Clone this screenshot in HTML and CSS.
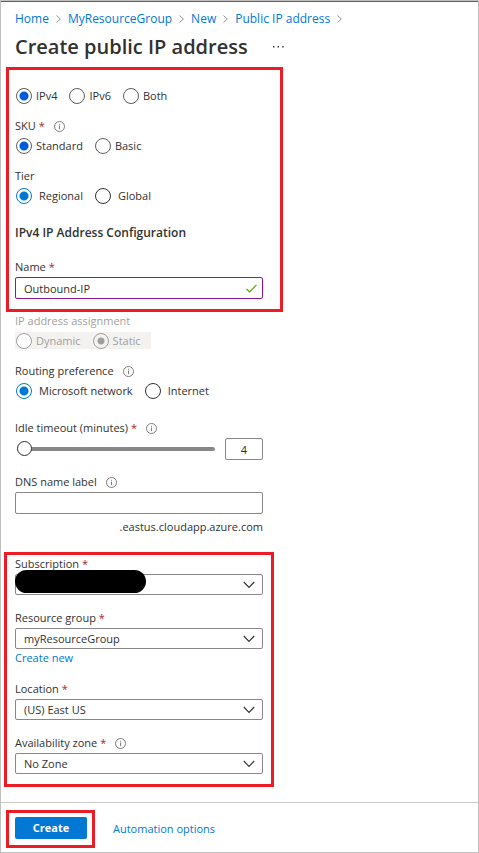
FILE: index.html
```html
<!DOCTYPE html>
<html lang="en">
<head>
<meta charset="utf-8">
<meta name="viewport" content="width=device-width, initial-scale=1">
<title>Create public IP address</title>
<link rel="stylesheet" href="styles.css">
</head>
<body>
<svg class="defs" aria-hidden="true">
  <symbol id="info" viewBox="0 0 11 11"><circle cx="5.5" cy="5.5" r="5" fill="none" stroke="currentColor" stroke-width="0.8"/><path d="M5.5 4.6V8.2M5.5 2.8V3.8" fill="none" stroke="currentColor" stroke-width="0.8"/></symbol>
  <symbol id="chevron" viewBox="0 0 12 8"><path d="M0.8 1L6 6.4L11.2 1" fill="none" stroke="currentColor" stroke-width="1.1"/></symbol>
  <symbol id="crumb" viewBox="0 0 6 10"><path d="M0.6 0.8L5.2 5L0.6 9.2" fill="none" stroke="currentColor" stroke-width="0.8"/></symbol>
</svg>
<div class="blade">
  <header class="top">
    <nav class="breadcrumb" aria-label="Breadcrumb">
      <a href="#">Home</a><svg><use href="#crumb"/></svg>
      <a href="#">MyResourceGroup</a><svg><use href="#crumb"/></svg>
      <a href="#">New</a><svg><use href="#crumb"/></svg>
      <a href="#">Public IP address</a><svg><use href="#crumb"/></svg>
    </nav>
    <div class="title-row">
      <h1>Create public IP address</h1>
      <button class="more" type="button" aria-label="More"><svg viewBox="0 0 11 2"><path d="M0 0h1.4v1.4H0zM4.6 0H6v1.4H4.6zM9.2 0h1.4v1.4H9.2z" fill="currentColor"/></svg></button>
    </div>
  </header>

  <form class="form" id="ip-form">
    <section class="callout callout-basics">
      <div class="radios">
        <label><input type="radio" name="version" checked>IPv4</label>
        <label><input type="radio" name="version">IPv6</label>
        <label><input type="radio" name="version">Both</label>
      </div>
      <fieldset class="group">
        <legend>SKU <span class="req">*</span><svg class="info"><use href="#info"/></svg></legend>
        <div class="radios">
          <label><input type="radio" name="sku" checked>Standard</label>
          <label><input type="radio" name="sku">Basic</label>
        </div>
      </fieldset>
      <fieldset class="group">
        <legend>Tier</legend>
        <div class="radios fluent">
          <label><input type="radio" name="tier" checked>Regional</label>
          <label><input type="radio" name="tier">Global</label>
        </div>
      </fieldset>
      <h2>IPv4 IP Address Configuration</h2>
      <div class="field">
        <label class="caption" for="name">Name <span class="req">*</span></label>
        <div class="control">
          <input class="box valid" id="name" type="text" value="Outbound-IP">
          <svg class="check" viewBox="0 0 11 9"><path d="M0.5 5L3.6 8L10.5 0.8" fill="none" stroke="currentColor" stroke-width="1.2"/></svg>
        </div>
      </div>
    </section>

    <section class="plain">
      <fieldset class="group assignment" disabled>
        <legend>IP address assignment</legend>
        <div class="radios">
          <label><input type="radio" name="assignment">Dynamic</label>
          <label><input type="radio" name="assignment" checked>Static</label>
        </div>
      </fieldset>
      <fieldset class="group">
        <legend>Routing preference<svg class="info"><use href="#info"/></svg></legend>
        <div class="radios fluent">
          <label><input type="radio" name="routing" checked>Microsoft network</label>
          <label><input type="radio" name="routing">Internet</label>
        </div>
      </fieldset>
      <div class="field timeout">
        <label class="caption" for="timeout">Idle timeout (minutes) <span class="req">*</span><svg class="info"><use href="#info"/></svg></label>
        <div class="slider-row">
          <input class="slider" id="timeout" type="range" min="4" max="30" value="4">
          <input class="box number" type="text" value="4" aria-label="Idle timeout value">
        </div>
      </div>
      <div class="field dns">
        <label class="caption" for="dns">DNS name label<svg class="info"><use href="#info"/></svg></label>
        <input class="box" id="dns" type="text">
        <p class="suffix">.eastus.cloudapp.azure.com</p>
      </div>
    </section>

    <section class="callout callout-placement">
      <div class="field">
        <label class="caption" for="subscription">Subscription <span class="req">*</span></label>
        <div class="control">
          <select class="box" id="subscription"><option></option></select>
          <span class="redaction"></span>
          <svg class="chevron"><use href="#chevron"/></svg>
        </div>
      </div>
      <div class="field">
        <label class="caption" for="group">Resource group <span class="req">*</span></label>
        <div class="control">
          <select class="box" id="group"><option>myResourceGroup</option></select>
          <svg class="chevron"><use href="#chevron"/></svg>
        </div>
        <a class="create-new" href="#">Create new</a>
      </div>
      <div class="field">
        <label class="caption" for="location">Location <span class="req">*</span></label>
        <div class="control">
          <select class="box" id="location"><option>(US) East US</option></select>
          <svg class="chevron"><use href="#chevron"/></svg>
        </div>
      </div>
      <div class="field">
        <label class="caption" for="zone">Availability zone <span class="req">*</span><svg class="info"><use href="#info"/></svg></label>
        <div class="control">
          <select class="box" id="zone"><option>No Zone</option></select>
          <svg class="chevron"><use href="#chevron"/></svg>
        </div>
      </div>
    </section>
  </form>

  <footer class="footer">
    <div class="callout callout-create"><button class="primary" type="submit" form="ip-form">Create</button></div>
    <a href="#">Automation options</a>
  </footer>
</div>
</body>
</html>
```

FILE: styles.css
```css
* { box-sizing: border-box; }

body {
  margin: 0;
  color: #323130;
  background: #fff;
  font: 11px/18px "Open Sans", "Noto Sans", sans-serif;
}

a { color: #0078d4; text-decoration: none; }
input, select, button { font: inherit; color: inherit; margin: 0; }
svg { display: block; flex: none; }
.defs { display: none; }

.blade {
  display: flex;
  flex-direction: column;
  min-height: 100vh;
  border: 1px solid #c0c0c0;
}

.top {
  padding: 8px 14px 0;
  border-top: 1px solid #1673bf;
}

.breadcrumb {
  display: flex;
  align-items: center;
  gap: 7px;
  font-size: 12px;
}
.breadcrumb svg { width: 5px; height: 10px; color: #605e5c; }

.title-row { display: flex; align-items: center; gap: 25px; }
h1 { margin: 0; font-size: 20px; line-height: 38px; font-weight: 600; }
.more { padding: 0; border: 0; background: none; }
.more svg { width: 11px; height: 2px; }

.form { flex: 1; padding-bottom: 15px; }

.callout { border: 3px solid #ed1c24; }
.callout-basics { width: 277px; margin: 1px 0 0 5px; padding: 17px 17px 10px 6px; }
.callout-placement { width: 270px; margin: 16px 0 0 3px; padding: 0 8px 10px; }
.plain { width: 262px; padding-left: 14px; }

.radios { display: flex; gap: 11px; line-height: 17px; }
.radios label { display: flex; align-items: center; gap: 4px; }
.fluent label { gap: 7px; }

input[type="radio"] {
  appearance: none;
  flex: none;
  width: 16px;
  height: 16px;
  margin-left: 1px;
  border: 1px solid #605e5c;
  border-radius: 50%;
  background: #fff;
}
input[type="radio"]:checked { background: radial-gradient(circle, #015cda 4px, #fff 5px); }
.fluent input[type="radio"] { border-color: #323130; }
.fluent input[type="radio"]:checked {
  border-color: #0078d4;
  background: radial-gradient(circle, #0078d4 4px, #fff 5px);
}

.group { min-width: 0; margin: 13px 0 0; padding: 0; border: 0; }
legend, .caption { display: flex; align-items: center; padding: 0; white-space: pre; }
legend { margin-bottom: 2px; }
.req { color: #a4262c; }
.info { width: 11px; height: 11px; margin-left: 9px; color: #605e5c; }

.assignment { margin-top: 0; color: #a19f9d; }
.assignment .radios { width: 136px; background: #f3f2f1; }
.assignment input[type="radio"] { border-color: #a19f9d; }
.assignment input[type="radio"]:checked { background: radial-gradient(circle, #a19f9d 3px, #f3f2f1 4px); }

h2 { margin: 20px 0 16px; font-size: 12px; line-height: 18px; font-weight: 600; }

.box {
  display: block;
  width: 100%;
  height: 22px;
  padding: 0 8px;
  border: 1px solid #8a8886;
  border-radius: 2px;
  background: #fff;
  appearance: none;
}
select.box { height: 21px; }
.box.valid { border-color: #881798; }
.caption { margin-bottom: 1px; }
.control { position: relative; }
.check { position: absolute; right: 6px; top: 7px; width: 11px; height: 9px; color: #57a300; }
.chevron { position: absolute; right: 8px; top: 7px; width: 12px; height: 8px; pointer-events: none; }
.redaction {
  position: absolute;
  left: 0;
  top: -4px;
  width: 131px;
  height: 23px;
  border-radius: 12px;
  background: #000;
}

.timeout { margin-top: 20px; }
.slider-row { display: flex; align-items: center; gap: 10px; padding-left: 2px; }
.slider { flex: 1; min-width: 0; height: 16px; appearance: none; background: none; }
.slider::-webkit-slider-runnable-track { height: 4px; border-radius: 2px; background: #8a8886; }
.slider::-webkit-slider-thumb {
  appearance: none;
  width: 15px;
  height: 15px;
  margin-top: -6px;
  border: 1px solid #323130;
  border-radius: 50%;
  background: #fff;
}
.number { flex: none; width: 38px; text-align: center; }

.dns { margin-top: 13px; }
.suffix { margin: 4px 0 0; text-align: right; }

.callout-placement .field + .field { margin-top: 14px; }
.create-new { display: block; line-height: 17px; }

.footer {
  display: flex;
  align-items: center;
  gap: 18px;
  padding: 7px 5px 4px;
  border-top: 1px solid #c8c8c8;
}
.callout-create { padding: 4px 5px 6px 6px; }
.primary {
  display: block;
  width: 72px;
  height: 22px;
  padding: 0;
  border: 0;
  border-radius: 2px;
  background: #0078d4;
  color: #fff;
  font-weight: 700;
}
```
